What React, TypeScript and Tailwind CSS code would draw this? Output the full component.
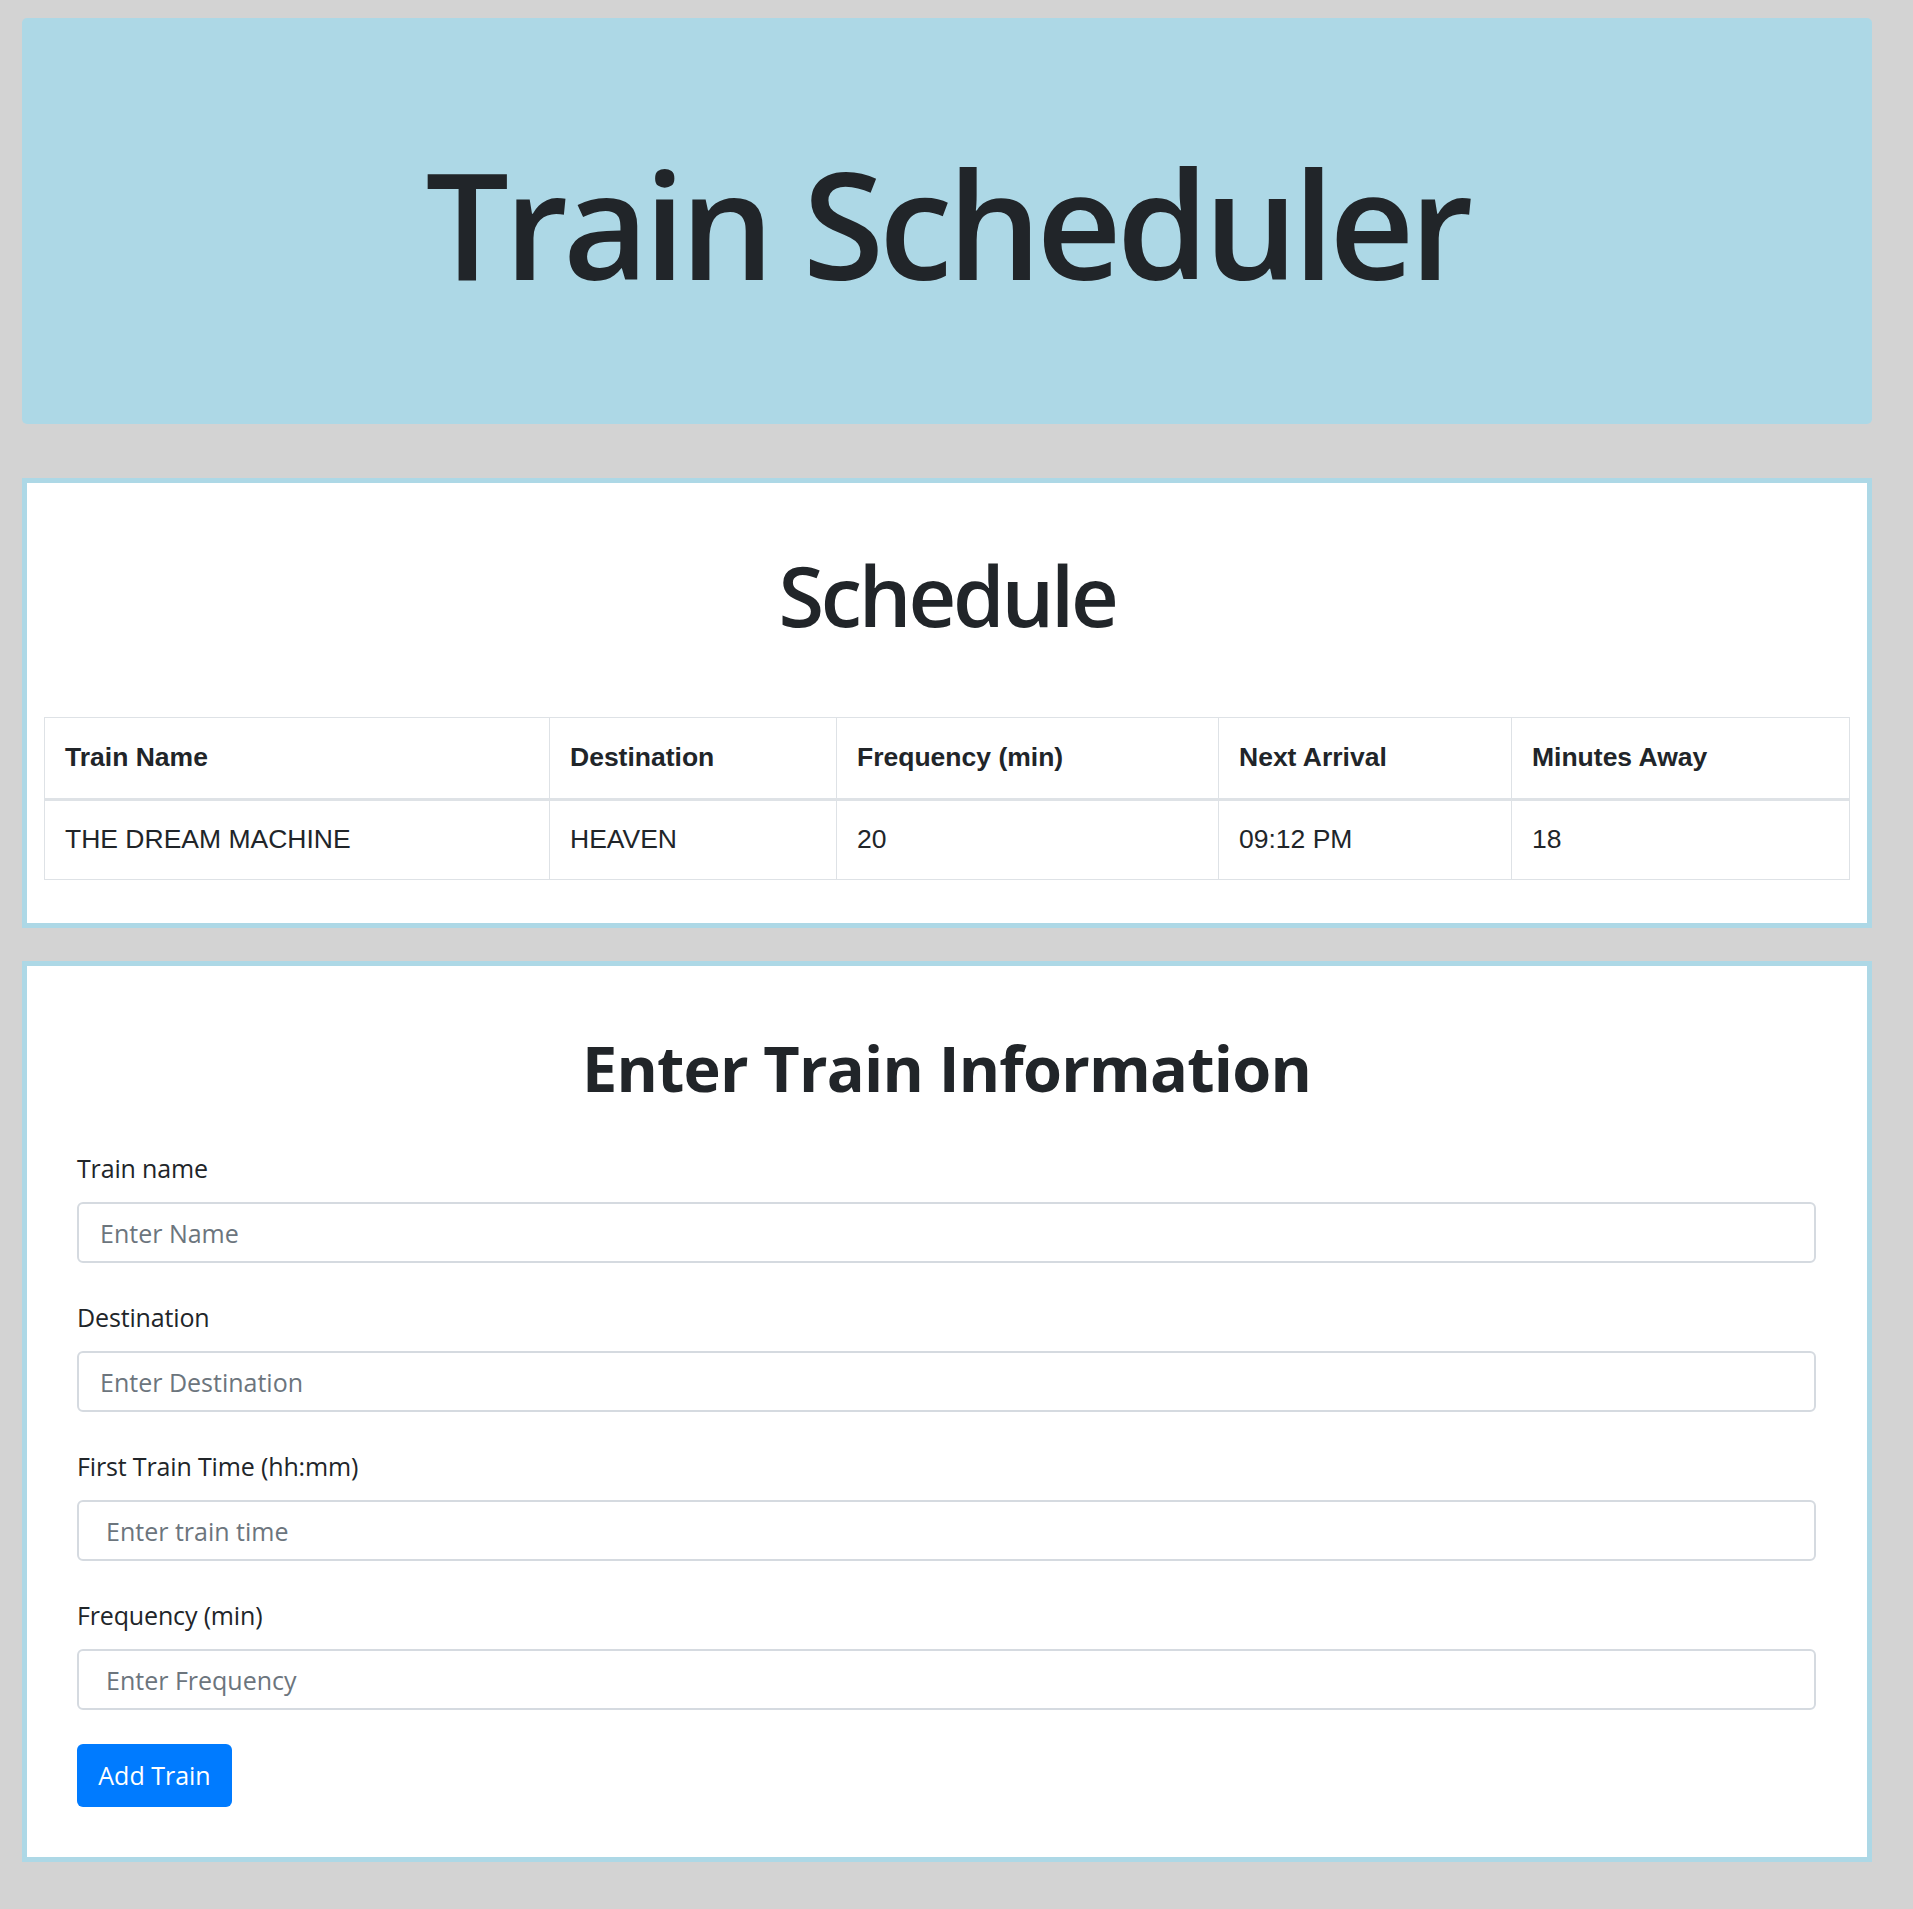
import React from "react";

const inputs = [
  { label: "Train name", placeholder: "Enter Name", pad: "pl-[21px]" },
  { label: "Destination", placeholder: "Enter Destination", pad: "pl-[21px]" },
  { label: "First Train Time (hh:mm)", placeholder: "Enter train time", pad: "pl-[27px]" },
  { label: "Frequency (min)", placeholder: "Enter Frequency", pad: "pl-[27px]" },
];

export default function App() {
  return (
    <div className="min-h-[1909px] bg-[#d3d3d3] pt-[18px] font-['Open_Sans',sans-serif] text-[#212529]">
      <div className="ml-[22px] w-[1850px]">
        {/* Header */}
        <div className="h-[406px] rounded-[5px] bg-[#add8e6] pt-[131px]">
          <h1 className="text-center text-[148px] leading-none font-semibold tracking-[-5px]">
            Train Scheduler
          </h1>
        </div>

        {/* Schedule card */}
        <div className="mt-[54px] border-[5px] border-[#add8e6] bg-white px-[17px] pt-[70px] pb-[43px]">
          <h2 className="text-center text-[83px] leading-none font-semibold tracking-[-3.2px]">Schedule</h2>
          <table className="mt-[81px] w-full table-fixed border-collapse font-['Liberation_Sans',Arial,sans-serif] text-[26.5px]">
            <colgroup>
              <col className="w-[505px]" />
              <col className="w-[287px]" />
              <col className="w-[382px]" />
              <col className="w-[293px]" />
              <col />
            </colgroup>
            <thead>
              <tr>
                {["Train Name", "Destination", "Frequency (min)", "Next Arrival", "Minutes Away"].map((h) => (
                  <th
                    key={h}
                    className="h-[82px] border border-b-[3px] border-[#dee2e6] px-[20px] py-0 text-left align-middle font-bold"
                  >
                    {h}
                  </th>
                ))}
              </tr>
            </thead>
            <tbody>
              <tr>
                {["THE DREAM MACHINE", "HEAVEN", "20", "09:12 PM", "18"].map((c) => (
                  <td key={c} className="h-[80px] border border-[#dee2e6] px-[20px] py-0 align-middle">
                    {c}
                  </td>
                ))}
              </tr>
            </tbody>
          </table>
        </div>

        {/* Form card */}
        <div className="mt-[33px] border-[5px] border-[#add8e6] bg-white pr-[51px] pl-[50px] pt-[70px] pb-[50px]">
          <h2 className="text-center text-[63px] leading-none font-bold tracking-[-0.8px]">
            Enter Train Information
          </h2>
          <form className="mt-[57px]" onSubmit={(e) => e.preventDefault()}>
            {inputs.map((f) => (
              <div key={f.label} className="mb-[42px]">
                <label className="block text-[25px] leading-none tracking-[-0.15px]">{f.label}</label>
                <input
                  type="text"
                  placeholder={f.placeholder}
                  className={`mt-[21px] block h-[61px] w-full rounded-[6px] border-2 border-[#d5dae0] bg-white ${f.pad} text-[25px] text-[#495057] outline-none placeholder:text-[#6c757d]`}
                />
              </div>
            ))}
            <button
              type="submit"
              className="-mt-[8px] h-[63px] w-[155px] rounded-[6px] bg-[#007bff] text-[25px] text-white"
            >
              Add Train
            </button>
          </form>
        </div>
      </div>
    </div>
  );
}
